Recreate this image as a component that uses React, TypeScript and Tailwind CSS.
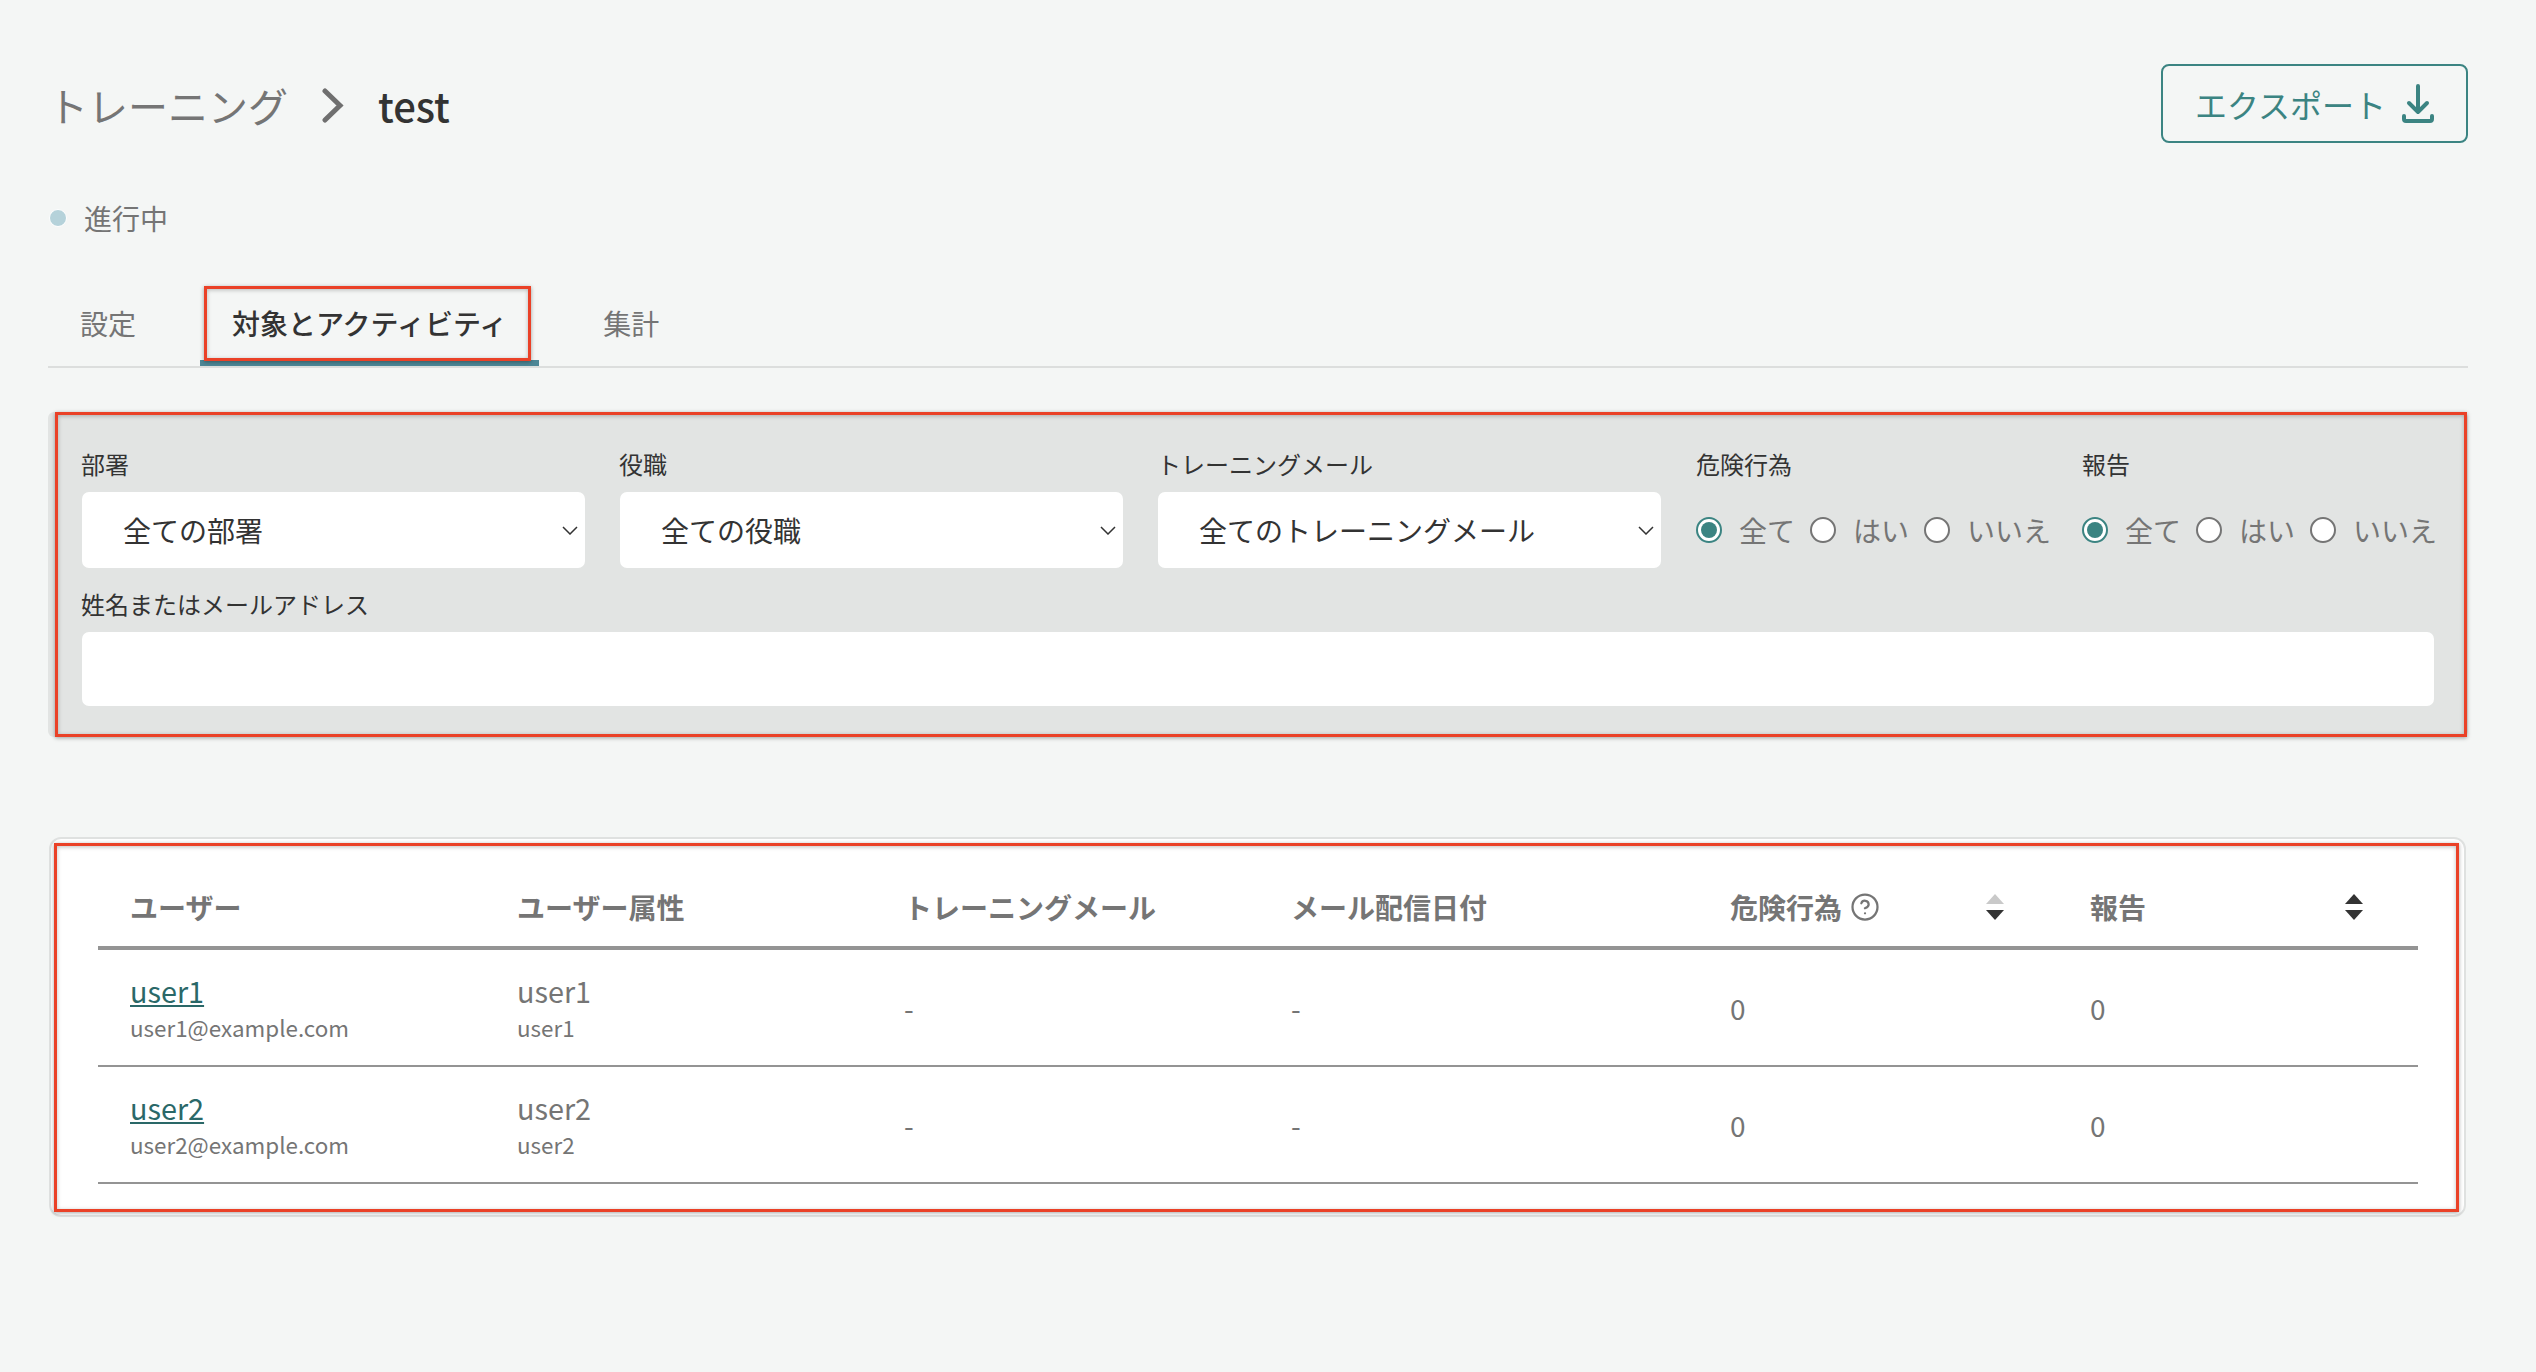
import { CircleHelp } from "lucide-react";

// red annotation frame drawn over the screenshot
const RedFrame = ({ className }: { className: string }) => (
  <div
    className={`pointer-events-none absolute border-[3px] border-[#ea4127] shadow-[0_1px_4px_rgba(0,0,0,0.35),inset_0_1px_4px_rgba(0,0,0,0.25)] ${className}`}
  />
);

const SelectField = ({ label, value }: { label: string; value: string }) => (
  <div className="w-[503px] shrink-0">
    <label className="mb-[13px] -ml-[1px] -mt-[1px] block h-[30px] text-[24px] leading-[30px] text-[#333]">{label}</label>
    <div className="relative">
      <select
        defaultValue={value}
        className="h-[76px] w-full appearance-none rounded-[7px] bg-white pl-[41px] text-[28px] text-[#333] outline-none"
      >
        <option>{value}</option>
      </select>
      <svg
        viewBox="0 0 16 9"
        className="pointer-events-none absolute top-[34px] right-[7px] h-[9px] w-[16px]"
        fill="none"
        stroke="#333"
        strokeWidth="1.5"
      >
        <path d="M1 1l7 7 7-7" />
      </svg>
    </div>
  </div>
);

const Radio = ({ label, checked }: { label: string; checked?: boolean }) => (
  <span className="flex shrink-0 items-center gap-[17px]">
    {checked ? (
      <span className="flex h-[26px] w-[26px] items-center justify-center rounded-full border-2 border-[#3b8482] bg-white">
        <span className="h-[16px] w-[16px] rounded-full bg-[#3b8482]" />
      </span>
    ) : (
      <span className="h-[26px] w-[26px] rounded-full border-2 border-[#757575] bg-white" />
    )}
    <span className="text-[28px] whitespace-nowrap text-[#757575]">{label}</span>
  </span>
);

const RadioField = ({ label }: { label: string }) => (
  <div className="w-[351px] shrink-0">
    <label className="mb-[13px] -mt-[1px] block h-[30px] text-[24px] leading-[30px] text-[#333]">{label}</label>
    <div className="flex h-[76px] items-center gap-[15px]">
      <Radio label="全て" checked />
      <Radio label="はい" />
      <Radio label="いいえ" />
    </div>
  </div>
);

const SortArrows = ({ upColor }: { upColor: string }) => (
  <svg viewBox="0 0 18 26" className="h-[26px] w-[18px]">
    <path d="M9 0l9 10H0z" fill={upColor} />
    <path d="M0 16h18l-9 10z" fill="#333" />
  </svg>
);

const users = ["user1", "user2"];

export default function App() {
  return (
    <div className="min-h-screen bg-[#f4f6f5] pt-[64px] pr-[68px] pl-[48px] font-['Noto_Sans_CJK_JP',sans-serif]">
      {/* header */}
      <div className="flex items-start justify-between">
        <div className="mt-[16px] flex h-[50px] items-center">
          <span className="text-[40px] leading-[50px] text-[#757575]">トレーニング</span>
          <svg viewBox="0 0 22 35" className="mr-[34px] ml-[34px] h-[35px] w-[22px]" fill="none" stroke="#6f6f6f" strokeWidth="5" strokeLinecap="round">
            <path d="M3 3l15 14.5L3 32" />
          </svg>
          <span className="text-[40px] leading-[50px] font-medium text-[#333]">test</span>
        </div>
        <button className="flex h-[79px] w-[307px] items-center justify-center gap-[16px] rounded-[8px] border-2 border-[#3b8482] text-[32px] text-[#3b8482]">
          エクスポート
          <svg viewBox="0 0 32 40" className="h-[40px] w-[32px]" fill="none" stroke="#3b8482" strokeWidth="4" strokeLinecap="round" strokeLinejoin="round">
            <path d="M16 2v26M7 19l9 9 9-9M2 32v3a2 2 0 0 0 2 2h24a2 2 0 0 0 2-2v-3" />
          </svg>
        </button>
      </div>

      {/* status */}
      <div className="mt-[55px] flex h-[40px] items-center gap-[17px]">
        <span className="ml-[1px] h-[18px] w-[18px] rounded-full border border-white bg-[#b5d2da]" />
        <span className="text-[28px] text-[#757575]">進行中</span>
      </div>

      {/* tabs */}
      <div className="mt-[48px] flex gap-[32px] border-b-2 border-[#dcdedd]">
        <div className="flex h-[80px] items-center px-[32px] pb-[6px] text-[28px] text-[#757575]">設定</div>
        <div className="relative flex h-[80px] items-center border-b-[6px] border-[#4d8796] px-[32px] text-[28px] font-medium text-[#333]">
          対象とアクティビティ
          <RedFrame className="top-0 right-[8px] -bottom-[1px] left-[4px]" />
        </div>
        <div className="flex h-[80px] items-center px-[32px] pb-[6px] text-[28px] text-[#757575]">集計</div>
      </div>

      {/* filters */}
      <div className="relative mt-[44px] rounded-[6px] bg-[#e2e4e3] pt-[38px] pr-[34px] pb-[31px] pl-[34px]">
        <div className="flex gap-[35px]">
          <SelectField label="部署" value="全ての部署" />
          <SelectField label="役職" value="全ての役職" />
          <SelectField label="トレーニングメール" value="全てのトレーニングメール" />
          <RadioField label="危険行為" />
          <RadioField label="報告" />
        </div>
        <label className="mt-[21px] mb-[13px] -ml-[1px] block h-[30px] text-[24px] leading-[30px] text-[#333]">
          姓名またはメールアドレス
        </label>
        <input className="block h-[74px] w-full rounded-[7px] bg-white outline-none" />
        <RedFrame className="top-0 right-[1px] bottom-0 left-[7px]" />
      </div>

      {/* table */}
      <div className="relative mt-[100px] mr-[2px] ml-[1px] rounded-[12px] border-2 border-[#dfe1e0] bg-white px-[47px] pt-[31px] pb-[31px]">
        <table className="w-[2320px] table-fixed border-separate border-spacing-0 text-left">
          <colgroup>
            <col className="w-[387px]" />
            <col className="w-[387px]" />
            <col className="w-[387px]" />
            <col className="w-[438px]" />
            <col className="w-[360px]" />
            <col className="w-[361px]" />
          </colgroup>
          <thead>
            <tr className="text-[28px] font-bold text-[#757575]">
              <th className="h-[80px] border-b-4 border-[#949494] pb-[2px] pl-[32px] font-bold">ユーザー</th>
              <th className="h-[80px] border-b-4 border-[#949494] pb-[2px] pl-[32px] font-bold">ユーザー属性</th>
              <th className="h-[80px] border-b-4 border-[#949494] pb-[2px] pl-[32px] font-bold">トレーニングメール</th>
              <th className="h-[80px] border-b-4 border-[#949494] pb-[2px] pl-[32px] font-bold">メール配信日付</th>
              <th className="h-[80px] border-b-4 border-[#949494] pr-[53px] pb-[2px] pl-[33px] font-bold">
                <div className="flex items-center justify-between">
                  <span className="flex items-center gap-[8px]">
                    危険行為
                    <CircleHelp className="h-[30px] w-[30px]" strokeWidth={1.8} />
                  </span>
                  <SortArrows upColor="#c9c9c9" />
                </div>
              </th>
              <th className="h-[80px] border-b-4 border-[#949494] pr-[55px] pb-[2px] pl-[33px] font-bold">
                <div className="flex items-center justify-between">
                  報告
                  <SortArrows upColor="#333" />
                </div>
              </th>
            </tr>
          </thead>
          <tbody className="text-[#757575]">
            {users.map((u) => (
              <tr key={u}>
                <td className="h-[117px] border-b-2 border-[#949494] pl-[32px]">
                  <a className="block text-[28.8px] leading-[38px] text-[#2a6868] underline">{u}</a>
                  <div className="text-[22.4px] leading-[34px]">{u}@example.com</div>
                </td>
                <td className="h-[117px] border-b-2 border-[#949494] pl-[32px]">
                  <div className="text-[28.8px] leading-[38px]">{u}</div>
                  <div className="text-[22.4px] leading-[34px]">{u}</div>
                </td>
                <td className="h-[117px] border-b-2 border-[#949494] pl-[32px] text-[28px]">-</td>
                <td className="h-[117px] border-b-2 border-[#949494] pl-[32px] text-[28px]">-</td>
                <td className="h-[117px] border-b-2 border-[#949494] pl-[33px] text-[28px]">0</td>
                <td className="h-[117px] border-b-2 border-[#949494] pl-[33px] text-[28px]">0</td>
              </tr>
            ))}
          </tbody>
        </table>
        <RedFrame className="top-[4px] right-[5px] bottom-[3px] left-[3px]" />
      </div>
    </div>
  );
}
